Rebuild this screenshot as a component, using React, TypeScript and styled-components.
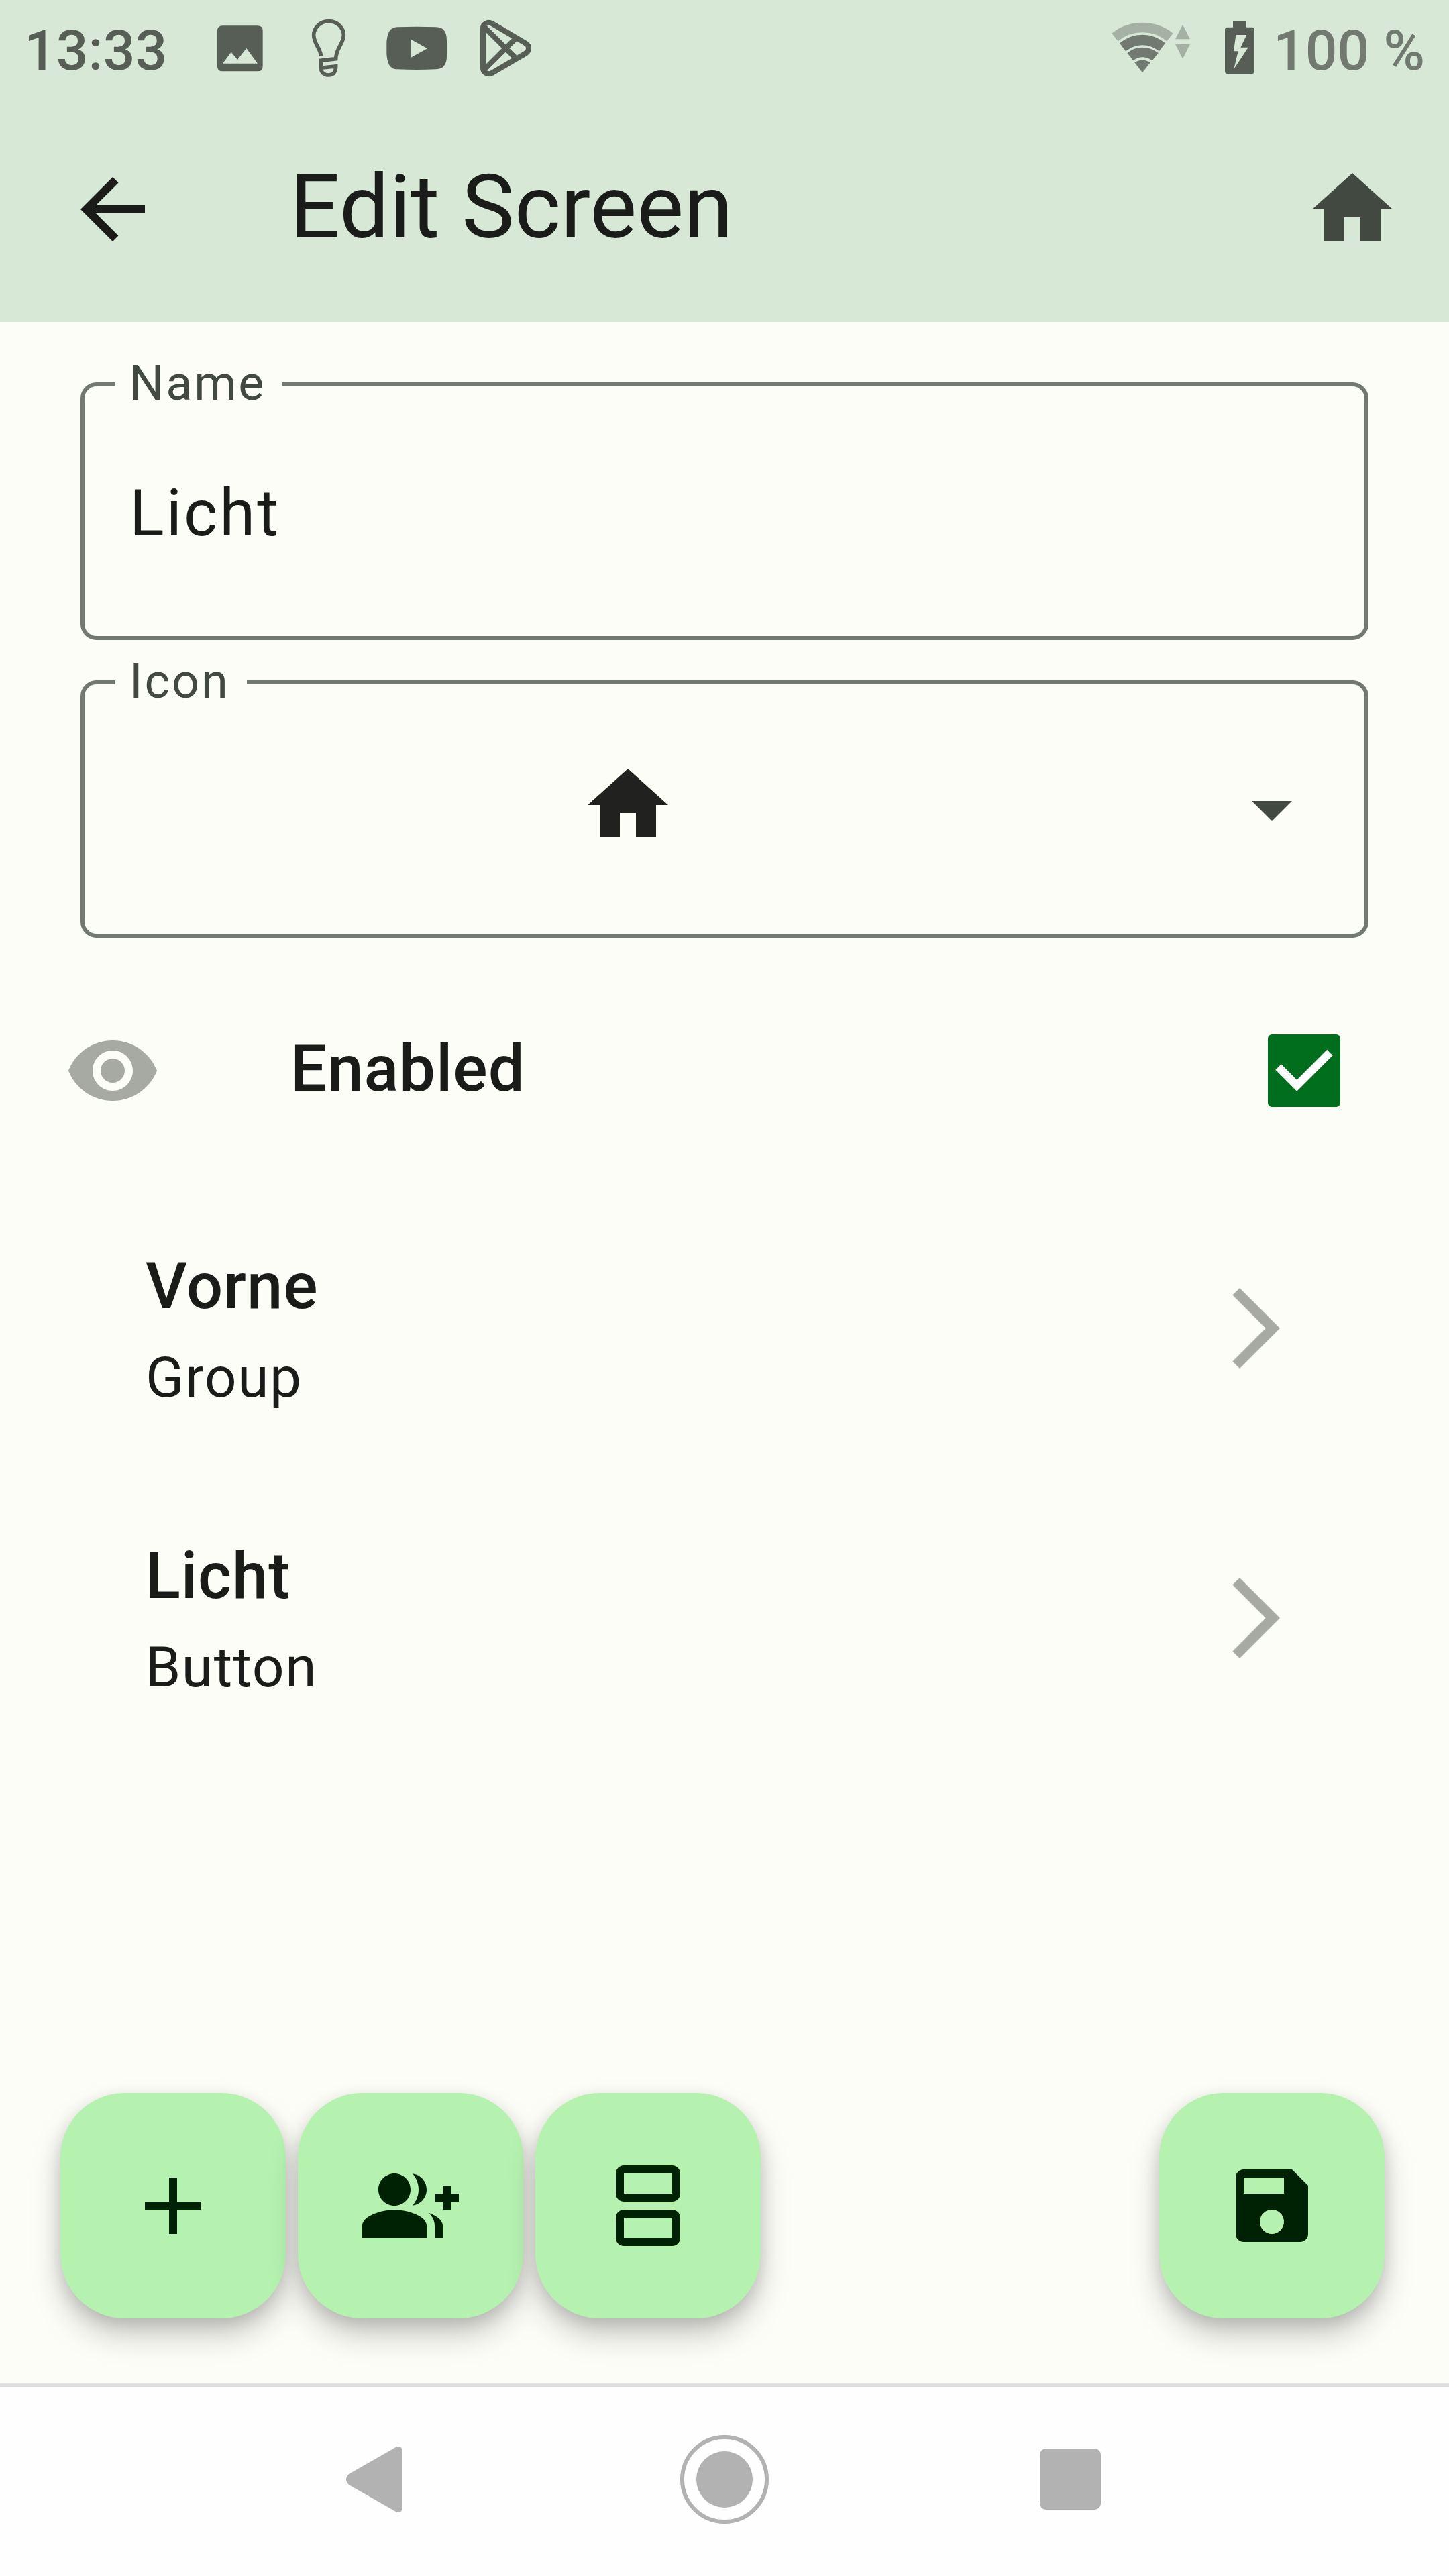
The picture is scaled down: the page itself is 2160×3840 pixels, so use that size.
import React from "react";
import styled, { createGlobalStyle } from "styled-components";

const color = {
  bar: "#d7e8d6",
  surface: "#fcfdf7",
  ink: "#1a1c19",
  muted: "#424940",
  outline: "#727970",
  faint: "#a6aaa2",
  primary: "#006e1c",
  container: "#b5f2b0",
  onContainer: "#002204",
  status: "#575e56",
  statusSoft: "#727970",
  statusFaint: "#a5b1a4",
  nav: "#b2b2b2",
};

const GlobalStyle = createGlobalStyle`
  * { box-sizing: border-box; }
  body {
    margin: 0;
    font-family: Roboto, "Noto Sans", sans-serif;
    color: ${color.ink};
    background: ${color.surface};
  }
  svg { display: block; flex: none; }
`;

const Screen = styled.div`
  width: 2160px;
  height: 3840px;
  display: flex;
  flex-direction: column;
  overflow: hidden;
  background: ${color.surface};
`;

const StatusBar = styled.div`
  height: 144px;
  flex: none;
  display: flex;
  align-items: center;
  justify-content: space-between;
  padding: 0 36px;
  background: ${color.bar};
`;

const StatusGroup = styled.div`
  display: flex;
  align-items: center;
`;

const Clock = styled.div`
  width: 256px;
  padding-top: 7px;
  font-size: 84px;
  line-height: 100px;
  font-weight: 500;
  color: ${color.status};
`;

const Charge = styled.div`
  margin-left: 22px;
  padding-top: 7px;
  font-size: 84px;
  line-height: 100px;
  font-weight: 500;
  color: ${color.statusSoft};
  white-space: nowrap;
`;

const BatteryIcon = styled.svg`
  margin-left: 40px;
`;

const AppBar = styled.header`
  height: 336px;
  flex: none;
  display: flex;
  align-items: center;
  padding: 0 72px 0 96px;
  background: ${color.bar};
`;

const Title = styled.h1`
  flex: 1;
  margin: 0 0 0 192px;
  padding-bottom: 6px;
  font-size: 132px;
  line-height: 168px;
  font-weight: 400;
`;

const Body = styled.main`
  flex: 1;
  display: flex;
  flex-direction: column;
  padding: 54px 0 96px;
`;

const Form = styled.div`
  display: flex;
  flex-direction: column;
  gap: 24px;
  padding: 0 120px;
`;

const Field = styled.fieldset`
  height: 420px;
  min-width: 0;
  margin: 0;
  padding: 0 66px;
  border: 6px solid ${color.outline};
  border-radius: 24px;
`;

const Legend = styled.legend`
  height: 78px;
  margin-left: -21px;
  padding: 0 25px 0 22px;
  font-size: 72px;
  line-height: 75px;
  letter-spacing: 2.9px;
  color: ${color.muted};
`;

const FieldContent = styled.div`
  height: 300px;
  display: flex;
  align-items: center;
`;

const FieldText = styled.div`
  padding: 6px 0 0 1px;
  font-size: 96px;
  line-height: 144px;
  letter-spacing: 3px;
`;

const Selected = styled.div`
  flex: 1;
  display: flex;
  justify-content: center;
  padding-bottom: 12px;
  margin-right: 144px;
`;

const EnabledRow = styled.div`
  height: 336px;
  margin-top: 30px;
  display: flex;
  align-items: center;
  padding: 0 162px 0 96px;
`;

const EnabledLabel = styled.div`
  flex: 1;
  margin-left: 193px;
  padding-bottom: 7px;
  font-size: 96px;
  line-height: 144px;
  font-weight: 500;
  letter-spacing: 0.9px;
`;

const Checkbox = styled.div`
  width: 108px;
  height: 108px;
  border-radius: 6px;
  background: ${color.primary};
`;

const ListRow = styled.div`
  height: 432px;
  display: flex;
  align-items: center;
  justify-content: space-between;
  padding: 0 216px 0 217px;
`;

const RowTitle = styled.div`
  font-size: 96px;
  line-height: 142px;
  font-weight: 500;
  letter-spacing: 0.9px;
`;

const RowSubtitle = styled.div`
  margin-top: 6px;
  font-size: 84px;
  line-height: 120px;
  letter-spacing: 1.5px;
`;

const FabBar = styled.div`
  margin-top: auto;
  display: flex;
  justify-content: space-between;
  padding: 0 96px 0 90px;
`;

const FabGroup = styled.div`
  display: flex;
  gap: 18px;
`;

const Fab = styled.button`
  width: 336px;
  height: 336px;
  padding: 0;
  border: 0;
  border-radius: 96px;
  display: flex;
  align-items: center;
  justify-content: center;
  background: ${color.container};
  color: ${color.onContainer};
  box-shadow: 0 26px 48px -3px rgba(0, 0, 0, 0.22), 0 8px 24px rgba(0, 0, 0, 0.12);
`;

const NavBar = styled.nav`
  height: 288px;
  flex: none;
  display: flex;
  align-items: center;
  justify-content: center;
  gap: 372px;
  background: linear-gradient(#a2a2a2 0 1px, #e0e0e0 1px 6px, #fefefe 6px);
`;

interface IconProps {
  d: string;
  fill?: string;
}

const Icon = ({ d, fill = "currentColor" }: IconProps) => (
  <svg width="144" height="144" viewBox="0 0 24 24" fill={fill}>
    <path d={d} />
  </svg>
);

const path = {
  back: "M20 11H7.83l5.59-5.59L12 4l-8 8 8 8 1.41-1.41L7.83 13H20v-2z",
  home: "M10 20v-6h4v6h5v-8h3L12 3 2 12h3v8z",
  dropdown: "M7 10l5 5 5-5z",
  eye: "M12 4.5C7 4.5 2.73 7.61 1 12c1.73 4.39 6 7.5 11 7.5s9.27-3.11 11-7.5c-1.73-4.39-6-7.5-11-7.5zM12 17c-2.76 0-5-2.24-5-5s2.24-5 5-5 5 2.24 5 5-2.24 5-5 5zm0-8c-1.66 0-3 1.34-3 3s1.34 3 3 3 3-1.34 3-3-1.34-3-3-3z",
  forward: "M6.23 20.23L8 22l10-10L8 2 6.23 3.77 14.46 12z",
  add: "M19 13h-6v6h-2v-6H5v-2h6V5h2v6h6v2z",
  group:
    "M22 9V7h-2v2h-2v2h2v2h2v-2h2V9zM8 12c2.21 0 4-1.79 4-4s-1.79-4-4-4-4 1.79-4 4 1.79 4 4 4zM8 13c-2.67 0-8 1.34-8 4v3h16v-3c0-2.66-5.33-4-8-4zM12.51 4.05C13.43 5.11 14 6.49 14 8s-.57 2.89-1.49 3.95C14.47 11.7 16 10.04 16 8s-1.53-3.7-3.49-3.95zM16.53 13.83C17.42 14.66 18 15.7 18 17v3h2v-3c0-1.45-1.59-2.51-3.47-3.17z",
  agenda:
    "M18 2H6C4.9 2 4 2.9 4 4v5c0 1.1.9 2 2 2h12c1.1 0 2-.9 2-2V4c0-1.1-.9-2-2-2zM18 9H6V4h12v5zM18 13H6c-1.1 0-2 .9-2 2v5c0 1.1.9 2 2 2h12c1.1 0 2-.9 2-2v-5c0-1.1-.9-2-2-2zM18 20H6v-5h12v5z",
  save: "M17 3H5c-1.11 0-2 .9-2 2v14c0 1.1.89 2 2 2h14c1.1 0 2-.9 2-2V7l-4-4zm-5 16c-1.66 0-3-1.34-3-3s1.34-3 3-3 3 1.34 3 3-1.34 3-3 3zm3-10H5V5h10v4z",
};

const NotificationIcons = () => (
  <>
    <svg width="132" height="144" viewBox="-54 0 396 432">
      <path
        fill={color.status}
        fillRule="evenodd"
        d="M65 115H222Q245 115 245 138V296Q245 319 222 319H65Q42 319 42 296V138Q42 115 65 115ZM66 284H222L172 216L132 267L104 233Z"
      />
    </svg>
    <svg width="132" height="144" viewBox="342 0 396 432">
      <g fill="none" stroke={color.status} strokeWidth="17">
        <path d="M506 251C503 215 473 195 473 157A67 62 0 0 1 607 157C607 196 572 215 572 263L505 271V303C505 324 520 336 540 336S572 322 572 297L512 303" />
      </g>
    </svg>
    <svg width="132" height="144" viewBox="738 0 396 432">
      <path
        fill={color.status}
        fillRule="evenodd"
        d="M848 121Q933 118 1020 121C1057 122 1068 148 1068 180V252C1068 284 1055 309 1020 310Q933 314 848 310C812 309 803 284 799 242V190C803 148 812 122 848 121ZM908 176V257L981 217Z"
      />
    </svg>
    <svg width="132" height="144" viewBox="1134 0 396 432">
      <g fill="none" stroke={color.status} strokeWidth="24" strokeLinejoin="round">
        <path d="M1230 126C1230 105 1254 96 1270 105L1420 193C1439 204 1439 228 1420 239L1270 327C1254 336 1230 326 1230 306Z" />
        <path d="M1235 120L1378 262M1235 312L1378 170" />
      </g>
    </svg>
  </>
);

const WifiIcon = () => (
  <svg width="128" height="144" viewBox="36 0 384 432">
    <g fill={color.statusFaint}>
      <path d="M52 149Q110 101 189 101T326 149L298 184Q250 145 189 145T80 184Z" />
      <path d="M369 110L402 175H336ZM369 263L402 197H336Z" />
    </g>
    <g fill={color.statusSoft}>
      <path d="M87 193Q132 155 189 155T291 193L264 229Q228 202 189 202T114 229Z" />
      <path d="M121 237Q150 212 189 212T260 237L233 271Q211 256 189 256T148 271Z" />
      <path d="M154 280Q189 257 224 280L189 325Z" />
    </g>
  </svg>
);

const Battery = () => (
  <BatteryIcon width="56" height="144" viewBox="540 0 168 432">
    <path
      fill={color.status}
      fillRule="evenodd"
      d="M594 96H654V122H679Q690 122 690 133V319Q690 330 679 330H569Q558 330 558 319V133Q558 122 569 122H594ZM607 156H655L628 212H662L598 309L617 229H597Z"
    />
  </BatteryIcon>
);

const rows = [
  { title: "Vorne", kind: "Group" },
  { title: "Licht", kind: "Button" },
];

export default function App() {
  return (
    <Screen>
      <GlobalStyle />
      <StatusBar>
        <StatusGroup>
          <Clock>13:33</Clock>
          <NotificationIcons />
        </StatusGroup>
        <StatusGroup>
          <WifiIcon />
          <Battery />
          <Charge>100 %</Charge>
        </StatusGroup>
      </StatusBar>
      <AppBar>
        <Icon d={path.back} />
        <Title>Edit Screen</Title>
        <Icon d={path.home} fill={color.muted} />
      </AppBar>
      <Body>
        <Form>
          <Field>
            <Legend>Name</Legend>
            <FieldContent>
              <FieldText>Licht</FieldText>
            </FieldContent>
          </Field>
          <Field>
            <Legend>Icon</Legend>
            <FieldContent>
              <Selected>
                <Icon d={path.home} fill="#212220" />
              </Selected>
              <Icon d={path.dropdown} fill={color.muted} />
            </FieldContent>
          </Field>
        </Form>
        <EnabledRow>
          <Icon d={path.eye} fill={color.faint} />
          <EnabledLabel>Enabled</EnabledLabel>
          <Checkbox>
            <svg width="108" height="108" viewBox="0 0 18 18" fill="none">
              <path d="M2.6 8.1L7.2 12.7L15.4 4.5" stroke="#fff" strokeWidth="2" />
            </svg>
          </Checkbox>
        </EnabledRow>
        {rows.map((row) => (
          <ListRow key={row.title}>
            <div>
              <RowTitle>{row.title}</RowTitle>
              <RowSubtitle>{row.kind}</RowSubtitle>
            </div>
            <Icon d={path.forward} fill={color.faint} />
          </ListRow>
        ))}
        <FabBar>
          <FabGroup>
            <Fab>
              <Icon d={path.add} />
            </Fab>
            <Fab>
              <Icon d={path.group} />
            </Fab>
            <Fab>
              <Icon d={path.agenda} />
            </Fab>
          </FabGroup>
          <Fab>
            <Icon d={path.save} />
          </Fab>
        </FabBar>
      </Body>
      <NavBar>
        <svg width="144" height="144" viewBox="0 0 144 144">
          <path
            fill={color.nav}
            d="M28 64L98 24Q108 20 108 32V112Q108 124 98 120L28 80Q20 72 28 64Z"
          />
        </svg>
        <svg width="144" height="144" viewBox="0 0 144 144">
          <circle cx="72" cy="72" r="63" fill="none" stroke={color.nav} strokeWidth="6" />
          <circle cx="72" cy="72" r="42" fill={color.nav} />
        </svg>
        <svg width="144" height="144" viewBox="0 0 144 144">
          <rect x="26" y="26" width="91" height="91" rx="9" fill={color.nav} />
        </svg>
      </NavBar>
    </Screen>
  );
}
